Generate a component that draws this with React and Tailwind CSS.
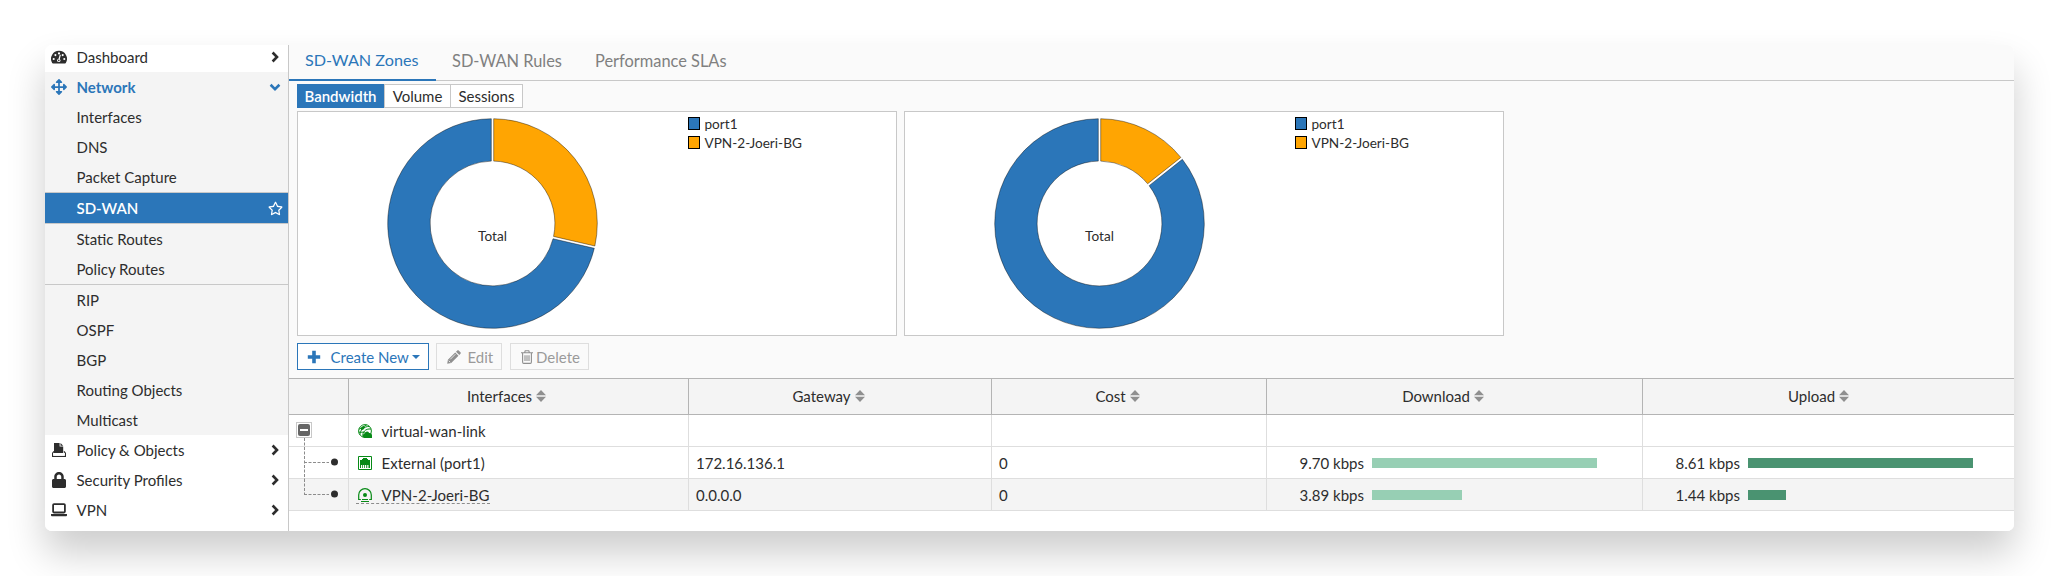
import React from "react";
import { FaArrowsAlt, FaLock, FaRegStar } from "react-icons/fa";

const BLUE = "#2b76b9";

const Chevron = ({ down }) => (
  <svg width="12" height="12" viewBox="0 0 12 12" fill="none" stroke="currentColor" strokeWidth="2.6">
    {down ? <path d="M1.6 3.8 6 8.1 10.4 3.8" /> : <path d="M3.6 1.5 8 6 3.6 10.5" />}
  </svg>
);

const GaugeIcon = () => (
  <svg width="16" height="14" viewBox="0 0 16 14">
    <path d="M8 .8A8 8 0 0 0 1.2 13c.2.3.4.4.7.4h12.2c.3 0 .5-.1.7-.4A8 8 0 0 0 8 .8Z" fill="currentColor" />
    <g fill="#fff">
      <circle cx="2.7" cy="9" r="1.05" />
      <circle cx="4.4" cy="5.1" r="1.05" />
      <circle cx="8" cy="3.4" r="1.05" />
      <circle cx="11.7" cy="5.1" r="1.05" />
      <circle cx="13.3" cy="9" r="1.05" />
      <circle cx="7.8" cy="10.4" r="1.7" />
      <path d="m7.3 9.6 1.5-5 1 .3-1.2 5Z" />
    </g>
    <circle cx="7.8" cy="10.4" r=".8" fill="currentColor" />
  </svg>
);

const PolicyIcon = () => (
  <svg width="14" height="14" viewBox="0 0 14 14">
    <path d="M2 0h5.6v3.6h3.6V10H2Z" fill="currentColor" />
    <path d="M8.5 0 11.2 2.7H8.5Z" fill="currentColor" />
    <path d="M2 8.4.6 10.2v3.2h12.8v-3.2L12 8.4" fill="none" stroke="currentColor" strokeWidth="1.2" />
    <path d="M1.2 10h2.9l1 1h3.8l1-1h2.9v2.8H1.2Z" fill="#fff" />
  </svg>
);

const LaptopIcon = () => (
  <svg width="16" height="14" viewBox="0 0 16 14">
    <rect x="2.1" y="1.1" width="11.8" height="8.4" rx=".9" fill="none" stroke="currentColor" strokeWidth="1.8" />
    <path d="M0 11h16v1.2c0 .6-.6 1-1.3 1H1.3c-.7 0-1.3-.4-1.3-1Z" fill="currentColor" />
  </svg>
);

const groups = {
  top: ["Interfaces", "DNS", "Packet Capture"],
  mid: ["Static Routes", "Policy Routes"],
  low: ["RIP", "OSPF", "BGP", "Routing Objects", "Multicast"],
};

function TopItem({ icon, label, active, className = "" }) {
  return (
    <div className={`flex h-[30px] items-center pl-1.5 pr-[7px] ${active ? "bg-[#f4f4f4] font-bold text-[#2b76b9]" : "bg-white"} ${className}`}>
      <span className="flex w-4 justify-center">{icon}</span>
      <span className="ml-[9.5px] grow">{label}</span>
      <Chevron down={active} />
    </div>
  );
}

const SubItem = ({ label }) => <div className="flex h-[30px] items-center pl-[31.5px]">{label}</div>;

function Sidebar() {
  return (
    <nav className="w-[244px] shrink-0 border-r border-[#c8c8c8] bg-white">
      <TopItem icon={<GaugeIcon />} label="Dashboard" className="-mt-[3px]" />
      <TopItem icon={<FaArrowsAlt size={16} />} label="Network" active />
      <div className="bg-[#f4f4f4]">
        {groups.top.map((l) => <SubItem key={l} label={l} />)}
        <div className="flex h-8 items-center border-y border-[#c8c8c8] bg-[#2b76b9] pl-[31.5px] pr-[5.5px] font-semibold text-white">
          <span className="grow">SD-WAN</span>
          <FaRegStar size={15} />
        </div>
        {groups.mid.map((l) => <SubItem key={l} label={l} />)}
        <div className="border-t border-[#c8c8c8]" />
        {groups.low.map((l) => <SubItem key={l} label={l} />)}
      </div>
      <TopItem icon={<PolicyIcon />} label="Policy & Objects" />
      <TopItem icon={<FaLock size={16} />} label="Security Profiles" />
      <TopItem icon={<LaptopIcon />} label="VPN" />
    </nav>
  );
}

const C = 105.5;
const pt = (r, a) => `${(C + r * Math.sin(a)).toFixed(2)} ${(C - r * Math.cos(a)).toFixed(2)}`;

function slice(start, end) {
  const R = 104.8;
  const r = 62.4;
  const g = 1.2;
  const [s, e] = [start + g / R, end - g / R];
  const [si, ei] = [start + g / r, end - g / r];
  const big = end - start > Math.PI ? 1 : 0;
  return `M${pt(R, s)}A${R} ${R} 0 ${big} 1 ${pt(R, e)}L${pt(r, ei)}A${r} ${r} 0 ${big} 0 ${pt(r, si)}Z`;
}

function Donut({ share }) {
  const cut = share * 2 * Math.PI;
  return (
    <svg width="211" height="211" viewBox="0 0 211 211">
      <path d={slice(0, cut)} fill="#ffa502" stroke="#000" strokeOpacity=".45" strokeWidth=".9" />
      <path d={slice(cut, 2 * Math.PI)} fill={BLUE} stroke="#000" strokeOpacity=".45" strokeWidth=".9" />
      <text x="105.5" y="123" textAnchor="middle" fontSize="13.6" fill="#2d2d2d">Total</text>
    </svg>
  );
}

const LegendItem = ({ label, color }) => (
  <div className="flex h-[19px] items-start">
    <span className={`h-[13px] w-3 border border-black ${color}`} />
    <span className="-mt-[2px] ml-[4.5px]">{label}</span>
  </div>
);

function ChartPanel({ share }) {
  return (
    <div className="flex h-[225px] w-[600px] border border-[#c8c8c8] bg-white pl-[88.5px] pt-[6px]">
      <Donut share={share} />
      <div className="ml-[90.5px] -mt-px flex flex-col text-[13.6px] leading-[19px]">
        <LegendItem label="port1" color="bg-[#2b76b9]" />
        <LegendItem label="VPN-2-Joeri-BG" color="bg-[#ffa502]" />
      </div>
    </div>
  );
}

const SortIcon = () => (
  <svg width="10" height="12" viewBox="0 0 10 12" fill="#8f8f8f"><path d="M5 0l5 5.2H0ZM5 12l5-5.2H0Z" /></svg>
);

const HeadCell = ({ label, className }) => (
  <div className={`flex items-center justify-center gap-1 pb-px ${className}`}>
    <span>{label}</span>
    <SortIcon />
  </div>
);

const GlobeIcon = () => (
  <svg width="14" height="14" viewBox="0 0 14 14">
    <g fill="none" stroke="#078a16" strokeWidth="1">
      <circle cx="7" cy="7" r="6.4" />
      <path d="M1 5.2 8.6 1M2 10.8C1.8 6 6 2.4 11.4 2.4M5 13C4 8.2 7.4 4.4 13 5M.8 8.2h6" />
    </g>
    <path d="M2.6 4.6 5 2l2.2 1-1.4 2.3-2.6.9Z" fill="#078a16" />
    <path d="M6.6 14a2.2 2.2 0 0 1-.4-4.2 2.7 2.7 0 0 1 5-.8A2.6 2.6 0 0 1 14 11.6V14Z" fill="#078a16" />
  </svg>
);

const PortIcon = () => (
  <svg width="14" height="14" viewBox="0 0 14 14">
    <path d="M.5.5h13v13H.5Z" fill="#fff" stroke="#078a16" />
    <path d="M2 12V4h2V3h1V2h4v1h1v1h2v8h-1V9H3v3Z" fill="#078a16" />
    <path d="M4.5 9v3M6.5 9v3M8.5 9v3M10.2 9v3" stroke="#078a16" strokeOpacity=".85" strokeWidth=".9" />
  </svg>
);

const TunnelIcon = () => (
  <svg width="14" height="15" viewBox="0 0 14 15" fill="none" stroke="#078a16">
    <path d="M2.8 11.5H.7V7a6.3 6.3 0 0 1 12.6 0v4.5h-2.1" strokeWidth="1.2" />
    <circle cx="7" cy="7" r="2" fill="#078a16" stroke="none" />
    <path d="M4 11.5h6M3 13.5h8" />
  </svg>
);

const COLS = "grid grid-cols-[59px_340px_303px_275px_376px_1fr]";

function Meter({ value, width, color }) {
  return (
    <div className="flex h-full items-center">
      <span className="w-[98px] pt-px text-right">{value}</span>
      <span className={`mt-px ml-2 h-2.5 ${color}`} style={{ width }} />
    </div>
  );
}

const rows = [
  { tree: "root", icon: <GlobeIcon />, name: "virtual-wan-link" },
  { tree: "child", icon: <PortIcon />, name: "External (port1)", gw: "172.16.136.1", cost: "0", down: ["9.70 kbps", 225], up: ["8.61 kbps", 225] },
  { tree: "last", icon: <TunnelIcon />, name: "VPN-2-Joeri-BG", gw: "0.0.0.0", cost: "0", down: ["3.89 kbps", 90], up: ["1.44 kbps", 38] },
];

function TreeCell({ kind }) {
  return (
    <svg width="59" height="32" viewBox="0 0 59 32">
      {kind === "root" ? (
        <>
          <rect x="7.5" y="7.5" width="15" height="15" fill="#fff" stroke="#c8c8c8" />
          <rect x="9" y="9" width="12" height="12" rx="2" fill="#666" />
          <path d="M11 15h8" stroke="#fff" strokeWidth="2" />
          <path d="M15.5 23v9" stroke="#8c8c8c" strokeDasharray="3 1.5" />
        </>
      ) : (
        <>
          <path d={kind === "last" ? "M15.5 0v16" : "M15.5 0v32"} stroke="#8c8c8c" strokeDasharray="3 1.5" />
          <path d="M15 15.5h25" stroke="#8c8c8c" strokeDasharray="3 1.5" />
          <circle cx="45.5" cy="15" r="3.5" fill="#2d2d2d" />
        </>
      )}
    </svg>
  );
}

const cell = "border-r border-[#dedede]";

function Table() {
  return (
    <div className="flex grow flex-col border-t border-[#b4b4b4] bg-white">
      <div className={`${COLS} h-9 border-b border-[#b4b4b4] bg-[#f4f4f4]`}>
        <div className="w-[60px] border-r border-[#b4b4b4]" />
        <HeadCell label="Interfaces" className="-mr-px border-r border-[#b4b4b4] pr-[23px]" />
        <HeadCell label="Gateway" className="-mr-px border-r border-[#b4b4b4] pr-[22px]" />
        <HeadCell label="Cost" className="-mr-px border-r border-[#b4b4b4] pr-[22px]" />
        <HeadCell label="Download" className="-mr-px border-r border-[#b4b4b4] pr-[22px]" />
        <HeadCell label="Upload" className="pr-[19px]" />
      </div>
      {rows.map((r) => (
        <div key={r.name} className={`${COLS} h-8 border-b border-[#dedede] ${r.tree === "last" ? "bg-[#f4f4f4]" : ""}`}>
          <div className={`${cell} -mb-px w-[60px]`}><TreeCell kind={r.tree} /></div>
          <div className={`${cell} -mr-px flex items-center pl-2`}>
            <div className={`flex h-[19px] items-center border-b border-dashed pl-[2px] pt-[2px] ${r.tree === "last" ? "border-[#8c8c8c]" : "border-transparent"}`}>
              {r.icon}
              <span className="ml-[9.5px] tracking-[0.05px]">{r.name}</span>
            </div>
          </div>
          <div className={`${cell} -mr-px flex items-center pl-2 pt-px`}>{r.gw}</div>
          <div className={`${cell} -mr-px flex items-center pl-2 pt-px`}>{r.cost}</div>
          <div className={`${cell} -mr-px`}>{r.down && <Meter value={r.down[0]} width={r.down[1]} color="bg-[#97cfb4]" />}</div>
          <div>{r.up && <Meter value={r.up[0]} width={r.up[1]} color="bg-[#4a9371]" />}</div>
        </div>
      ))}
    </div>
  );
}

const PencilIcon = () => (
  <svg width="14" height="14" viewBox="0 0 14 14" fill="#8f8f8f">
    <path d="M.2 13.8.9 9.8 8.2 2.5l3.3 3.3-7.3 7.3ZM9 1.7 10.3.5c.4-.4 1-.4 1.4 0l1.8 1.8c.4.4.4 1 0 1.4L12.3 5Z" />
    <path d="M1.7 10.7l1.6 1.6M3.2 9.4 8.4 4.2" stroke="#fafafa" strokeWidth=".8" />
  </svg>
);

const TrashIcon = () => (
  <svg width="12" height="14" viewBox="0 0 12 14" fill="none" stroke="#8f8f8f" strokeWidth="1.1">
    <path d="M0 2.8h12M3.6 2.6l.6-1.8h3.6l.6 1.8M1.6 3v9c0 .9.4 1.4 1.1 1.4h6.6c.7 0 1.1-.5 1.1-1.4V3M4 5.3v5.8M6 5.3v5.8M8 5.3v5.8" />
  </svg>
);

export default function App() {
  return (
    <div className="h-[576px] w-full overflow-hidden bg-white px-[45px] pt-[45px] font-[Lato,sans-serif] text-[15px] leading-5 text-[#2d2d2d]">
      <div className="h-[486px] rounded-[7px] shadow-[0_22px_38px_rgba(0,0,0,0.2)]">
        <div className="flex h-full overflow-hidden rounded-[7px] bg-[#fafafa]">
          <Sidebar />
          <main className="flex min-w-0 grow flex-col">
            <div className="flex h-9 border-b border-[#c8c8c8] text-[16.4px] text-[#808080]">
              <div className="flex h-9 w-[147px] items-center border-b-2 border-[#2b76b9] pb-1 pl-4 text-[16.2px] text-[#2b76b9]">SD-WAN Zones</div>
              <div className="flex w-[143px] items-center pb-1 pl-4">SD-WAN Rules</div>
              <div className="flex w-[165px] items-center pb-1 pl-4">Performance SLAs</div>
            </div>
            <div className="ml-2 mt-[3px] flex h-6">
              <div className="flex w-[87px] items-center justify-center bg-[#2b76b9] font-semibold text-white">Bandwidth</div>
              <div className="flex w-[67px] items-center justify-center border border-[#c8c8c8] bg-white">Volume</div>
              <div className="flex w-[72px] items-center justify-center border border-l-0 border-[#c8c8c8] bg-white">Sessions</div>
            </div>
            <div className="ml-2 mt-[3px] flex gap-[7px]">
              <ChartPanel share={3.89 / 13.59} />
              <ChartPanel share={1.44 / 10.05} />
            </div>
            <div className="mb-2 ml-2 mt-[7px] flex h-[27px] text-[#9a9a9a]">
              <div className="flex w-[132px] items-center border border-[#2b76b9] bg-white pl-[9px] text-[#2b76b9]">
                <svg width="14" height="14" viewBox="0 0 14 14"><path d="M7 .8v12.4M.8 7h12.4" stroke={BLUE} strokeWidth="3.6" /></svg>
                <span className="ml-[9.5px] pt-px">Create New</span>
                <svg className="ml-[3px]" width="8" height="4" viewBox="0 0 8 4"><path d="M0 0h8L4 4Z" fill={BLUE} /></svg>
              </div>
              <div className="ml-[7px] flex w-[66px] items-center border border-[#dedede] pl-2.5">
                <PencilIcon />
                <span className="ml-[6.5px] pt-px">Edit</span>
              </div>
              <div className="ml-2 flex w-[79px] items-center border border-[#dedede] pl-2.5">
                <TrashIcon />
                <span className="ml-[3px] pt-px">Delete</span>
              </div>
            </div>
            <Table />
          </main>
        </div>
      </div>
    </div>
  );
}
